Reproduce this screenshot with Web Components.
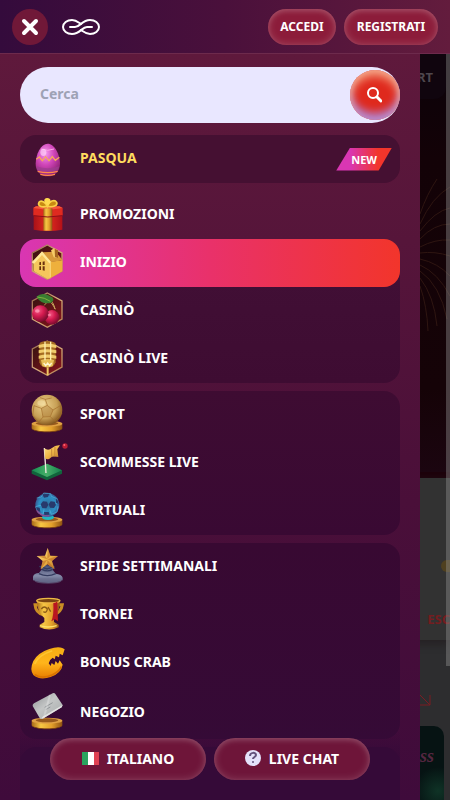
<!DOCTYPE html>
<html lang="it">
<head>
<meta charset="utf-8">
<meta name="viewport" content="width=device-width, initial-scale=1">
<title>Menu</title>
<style>
  html, body { height: 100%; }
  body {
    margin: 0;
    overflow: hidden;
    background: #2d2d2f;
    color: #fff;
    font-family: "Noto Sans", sans-serif;
    font-size: 14px;
    font-weight: 700;
  }
</style>
</head>
<body>
<casino-app></casino-app>

<script>
// small helper so every element gets an open root with its own styles
class BaseElement extends HTMLElement {
  constructor() {
    super();
    this.attachShadow({ mode: "open" });
  }
  connectedCallback() {
    this.shadowRoot.innerHTML = `<style>* { box-sizing: border-box; }</style>` + this.render();
  }
}

const hexagon = `
  <path d="M52 0 96 24V78L52 103 7 78V24Z" fill="url(#hexFill)" stroke="url(#rim)" stroke-width="4"/>`;

const pedestal = `
  <path d="M5 80v13c0 15 92 15 92 0V80Z" fill="url(#goldBar)"/>
  <path d="M5 92c4 15 88 15 92 0v2c-4 16-88 16-92 0Z" fill="#7a3f10"/>
  <ellipse cx="51" cy="80" rx="46" ry="9" fill="#dfa144"/>
  <ellipse cx="51" cy="79" rx="34" ry="6" fill="#96591c"/>`;

const icons = {
  egg: `
    <path d="M53 8C73 8 90 40 90 68 90 92 74 106 53 106S17 92 17 68C17 40 33 8 53 8Z" fill="url(#egg)"/>
    <path d="M19 55l9-7 9 11 10-12 10 12 10-12 9 11 12-9" fill="none" stroke="#f7a65c" stroke-width="4"/>
    <path d="M19 76q34 12 69 0l-4 12q-32 9-62 0Z" fill="#9b3f8f" opacity=".75"/>
    <path d="M23 91q30 8 60 0M31 100q22 6 44 0" fill="none" stroke="#ff8a48" stroke-width="4"/>
    <path d="M34 24q18 8 38 0" fill="none" stroke="#ffa6e9" stroke-width="3"/>
    <ellipse cx="40" cy="34" rx="9" ry="11" fill="#ffd4f8" opacity=".65"/>`,
  gift: `
    <path d="M11 48h86v50q-43 8-86 0Z" fill="url(#red)"/>
    <path d="M10 33 18 28h70l10 5v22q-44 8-88 0Z" fill="#df2a20"/>
    <path d="M10 33 18 28h70l10 5-44 6Z" fill="#f3563c"/>
    <path d="M40 34h27v67H40Z" fill="url(#goldBar)"/>
    <path d="M52 28C34 32 22 27 27 16c6-9 20 0 25 12C57 12 74 6 80 16c4 10-11 16-28 12Z" fill="#c88a12" stroke="#f8d046" stroke-width="5"/>
    <path d="M54 26C40 18 39 4 51 3s15 12 3 23Z" fill="#ffd94f"/>
    <path d="M11 56q42 8 86 0" fill="none" stroke="#8f0f17" stroke-width="3"/>`,
  home: `
    ${hexagon}
    <path d="M10 50 37 20 62 52v48L52 102 10 78Z" fill="#f5c75c"/>
    <path d="M60 50 97 46v33L60 100Z" fill="#eeb03c"/>
    <path d="M37 22 77 20 98 46 60 52Z" fill="#d8993a"/>
    <path d="M5 52 36 19l28 33-6 3-22-25-24 26Z" fill="#ffe998"/>
    <path d="M63 16l9-6 12 6v23l-13-2Z" fill="#f6cb68"/><path d="M74 11l10 5v23l-9-3Z" fill="#a66420"/>
    <path d="M28 52l5-1v9h-5Zm10-2 6-1v11h-6ZM28 64h5v11h-5Zm10 0h6v13l-6-1Z" fill="#69300d"/>
    <path d="M61 54v43" stroke="#fff0a5" stroke-width="2"/>`,
  cherry: `
    ${hexagon}
    <path d="M43 37C55 21 61 20 76 49M55 18q15 6 20 30" fill="none" stroke="#c9a55c" stroke-width="3"/>
    <circle cx="66" cy="73" r="22" fill="url(#cherry)"/>
    <circle cx="31" cy="62" r="25" fill="url(#cherry)"/>
    <ellipse cx="22" cy="54" rx="7" ry="5" fill="#ff9ab5" opacity=".8"/>
    <ellipse cx="58" cy="66" rx="5" ry="4" fill="#ff8ca9" opacity=".7"/>
    <path d="M19 11Q37-6 67 13q8 9-3 16Q36 37 19 11Z" fill="#397d31"/>
    <path d="M22 12q22 1 39 13" fill="none" stroke="#83b33f" stroke-width="3"/>`,
  mic: `
    ${hexagon}
    <path d="M28 8Q32 0 52 0t25 8v56q-6 16-25 16T28 64Z" fill="#a56c22"/>
    <path d="M26 12q26-8 53 0v9q-27-6-53 0ZM26 28q26-7 53 0v9q-27-6-53 0ZM26 44q26-7 53 0v9q-27-6-53 0Z" fill="#f0cc6c"/>
    <path d="M33 57q19-6 39 0l-4 19q-16 6-31 0Z" fill="#e8be58"/>
    <path d="M45 2v56M62 2v56" stroke="#fff1b0" stroke-width="4"/>
    <path d="M41 66l6 8 6-8 6 8 6-8" fill="none" stroke="#fff6cf" stroke-width="4"/>
    <path d="M53 79v24" stroke="#f0c763" stroke-width="6"/>`,
  ball: `
    ${pedestal}
    <circle cx="51" cy="39" r="46" fill="url(#ballGold)"/>
    <path d="M34 34 52 25l17 14-8 20-22 1ZM30 2l16 5 19-4M52 25l-6-18M34 34 12 26M39 60 26 76M61 59l14 14M69 39l22-13M12 26 8 55l18 21M91 26l4 24-20 23" fill="none" stroke="#a36c2b" stroke-width="2"/>
    <path d="M34 34 52 25l17 14-8 20-22 1Z" fill="#a97735" opacity=".4"/>
    <ellipse cx="34" cy="18" rx="12" ry="8" fill="#fff0bf" opacity=".4"/>`,
  flag: `
    <path d="M5 76 51 56l45 20v10l-45 20L5 86Z" fill="#11643c"/>
    <path d="M5 76 51 56l45 20-45 20Z" fill="url(#green)"/>
    <path d="M43 9 48 84" stroke="#efe6df" stroke-width="4"/>
    <path d="M43 10q12 9 23-1T90 1l-8 12 3 23q-18-4-24 3t-16 1Z" fill="url(#gold)"/>
    <path d="M65 10v26M75 5l-1 29" stroke="#c98a3a" stroke-width="3"/>
    <circle cx="105" cy="3" r="8" fill="#ba1e35"/><circle cx="103" cy="0" r="3" fill="#ff6573"/>`,
  cyber: `
    ${pedestal}
    <ellipse cx="54" cy="73" rx="18" ry="8" fill="#21b9c1"/>
    <circle cx="52" cy="36" r="36" fill="url(#blue)"/>
    <path d="M20 15l14-3 7-12 21 2 2 8 17 7-1 14-12 6M34 36l-17 5 8 19 14 4 3-15M59 50l5 14 17-7 3-17" fill="none" stroke="#4fb6dc" stroke-width="2"/>
    <path d="M32 34l7-9 12 1 4 10-6 10-12-1ZM56 34l6-9 12 1 4 10-6 9-12-1ZM37 4l21-2-4 10-12 2ZM18 43l11 1 2 12-9-2ZM78 16l6 8 2 9-8-4ZM42 57l14 0 3 8-16 1Z" fill="#283a6c"/>
    <path d="M20 52q14 20 38 16" fill="none" stroke="#8d4c92" stroke-width="4"/>`,
  star: `
    <path d="M9 83q3-11 18-11l9-12-7-8 22-4 23 6-6 8 9 12q18 1 21 12v8q-40 16-89 0Z" fill="url(#stone)"/>
    <path d="M28 52l23 8 23-7M36 61q16 9 32 0M27 74q25 12 50 0" fill="none" stroke="#343b5f" stroke-width="4"/>
    <ellipse cx="54" cy="96" rx="40" ry="8" fill="#6d718f" opacity=".55"/>
    <path d="M53-3 61 20l23 1-18 15 8 25-22-15-20 15 6-25-18-15 25-1Z" fill="url(#gold)"/>
    <path d="M53-3 52 30 61 20ZM84 21 52 31l14 5ZM74 61 52 32v14ZM32 61l20-29-14 4ZM20 21l32 10-7-11Z" fill="#b35e20" opacity=".5"/>`,
  cup: `
    <path d="M26 23H15q2 24 24 30M84 23h13q-3 22-24 30" fill="none" stroke="#c98d24" stroke-width="9"/>
    <path d="M20 10q34 12 70 0-1 38-18 53v12l14 8v8q-28 13-57 0v-8l14-8V63Q22 48 20 10Z" fill="url(#goldBar)"/>
    <ellipse cx="55" cy="11" rx="35" ry="7" fill="#7a4511" stroke="#edba45" stroke-width="4"/>
    <path d="M70 18q8 0 12-5l2 60-9-6-11 6q8-18 6-55Z" fill="#b91520"/>
    <path d="M34 36q9-12 18 0-2 14-12 8M54 30l8 14" fill="none" stroke="#8a5a16" stroke-width="4"/>
    <path d="M30 86q23 8 50 0" fill="none" stroke="#ffe46b" stroke-width="4"/>`,
  crab: `
    <path d="M104 13 97 9Q83 3 58 12 24 23 10 48-2 74 10 90q19 17 52 6 31-11 36-37l-9-13-5 10-7-8-4 12-8-6-3 9-6-8q3-12 12-17l6 5 3-11 10 5 2-11 9 5Z" fill="url(#crab)"/>
    <path d="M15 55Q28 29 65 18" fill="none" stroke="#ffd445" stroke-width="5" stroke-linecap="round" opacity=".6"/>
    <path d="M14 89q22 14 52 1 22-10 28-25" fill="none" stroke="#d97300" stroke-width="5"/>`,
  card: `
    ${pedestal}
    <path d="M8 36q-1-5 4-8L68-2q5-3 8 2l22 33-3 7-57 34q-6 3-9-2Z" fill="url(#silver)"/>
    <path d="M38 74 95 40l3-7-63 37Z" fill="#e3e4e2"/>
    <path d="M44 40l24-14M47 47l14-8" fill="none" stroke="#93979a" stroke-width="3"/>
    <path d="M60 2 42 70" stroke="#fff" stroke-width="6" opacity=".25"/>`
};

class MenuIcon extends BaseElement {
  render() {
    return `
      <style>
        :host { display: block; width: 36px; height: 36px; flex: none; }
        svg { display: block; width: 100%; height: 100%; overflow: visible; }
      </style>
      <svg viewBox="0 0 108 108" aria-hidden="true">
        <defs>
          <linearGradient id="gold" x1="0" y1="0" x2="1" y2="1">
            <stop stop-color="#ffe58c"/><stop offset=".5" stop-color="#efb647"/><stop offset="1" stop-color="#b8722a"/>
          </linearGradient>
          <linearGradient id="rim" x1="0" y1="0" x2="1" y2="1">
            <stop stop-color="#8f5f45"/><stop offset=".5" stop-color="#d9ae7c"/><stop offset="1" stop-color="#b07b4e"/>
          </linearGradient>
          <linearGradient id="goldBar">
            <stop stop-color="#a76817"/><stop offset=".3" stop-color="#f7c744"/><stop offset=".65" stop-color="#e3a02b"/><stop offset="1" stop-color="#8c5112"/>
          </linearGradient>
          <linearGradient id="hexFill" x1="0" y1="0" x2="1" y2="1">
            <stop stop-color="#33120f"/><stop offset="1" stop-color="#8a141e"/>
          </linearGradient>
          <linearGradient id="red"><stop stop-color="#a91118"/><stop offset=".5" stop-color="#e32b20"/><stop offset="1" stop-color="#b31118"/></linearGradient>
          <linearGradient id="green"><stop stop-color="#168a52"/><stop offset=".5" stop-color="#46af68"/><stop offset="1" stop-color="#147e4d"/></linearGradient>
          <linearGradient id="stone" x1="0" y1="0" x2="0" y2="1"><stop stop-color="#444b70"/><stop offset=".6" stop-color="#858ba9"/><stop offset="1" stop-color="#4e5272"/></linearGradient>
          <linearGradient id="silver" x1="0" y1="0" x2="1" y2="1"><stop stop-color="#8c9093"/><stop offset=".45" stop-color="#c4c6c6"/><stop offset="1" stop-color="#a5a9aa"/></linearGradient>
          <linearGradient id="crab" x1="0" y1="0" x2="0" y2="1"><stop stop-color="#f4ad13"/><stop offset=".5" stop-color="#ffb51b"/><stop offset="1" stop-color="#e87c00"/></linearGradient>
          <radialGradient id="egg" cx=".4" cy=".3" r=".7"><stop stop-color="#f699ee"/><stop offset=".5" stop-color="#d045b9"/><stop offset="1" stop-color="#932278"/></radialGradient>
          <radialGradient id="cherry" cx=".35" cy=".3" r=".7"><stop stop-color="#f55b87"/><stop offset=".5" stop-color="#d51b50"/><stop offset="1" stop-color="#7d0b30"/></radialGradient>
          <radialGradient id="ballGold" cx=".4" cy=".35" r=".65"><stop stop-color="#ecd08c"/><stop offset=".65" stop-color="#c79f55"/><stop offset="1" stop-color="#86591f"/></radialGradient>
          <radialGradient id="blue"><stop stop-color="#2f6f9b"/><stop offset=".7" stop-color="#2d8fc4"/><stop offset="1" stop-color="#375b94"/></radialGradient>
        </defs>
        ${icons[this.getAttribute("name")] || ""}
      </svg>`;
  }
}

class PillButton extends BaseElement {
  render() {
    return `
      <style>
        :host { display: block; }
        button {
          display: flex;
          align-items: center;
          justify-content: center;
          gap: 8px;
          width: 100%;
          height: 36px;
          padding: 0 12px;
          border: 0;
          border-radius: 24px;
          background: #8c1c3a;
          box-shadow: inset 0 0 8px rgba(255, 255, 255, .2), inset 0 2px 5px rgba(255, 255, 255, .12);
          color: #fff;
          font: inherit;
          font-size: 12px;
          cursor: pointer;
        }
        :host([large]) button {
          height: 42px;
          padding-bottom: 2px;
          background: #6e1539;
          font-size: 14px;
        }
      </style>
      <button type="button"><slot name="icon"></slot><slot></slot></button>`;
  }
}

class TopBar extends BaseElement {
  render() {
    return `
      <style>
        :host {
          display: flex;
          align-items: center;
          height: 54px;
          padding: 0 12px;
          border-bottom: 1px solid #6d2a4c;
          background: linear-gradient(90deg, #340b3c, #4a103b 50%, #631c3d);
        }
        .close {
          display: grid;
          place-items: center;
          width: 36px;
          height: 36px;
          padding: 0;
          border: 0;
          border-radius: 50%;
          background: #701838;
        }
        .logo { margin-left: 14px; margin-right: auto; }
        .logo svg, .close svg { display: block; }
        .actions { display: flex; gap: 8px; }
        .login { min-width: 68px; }
        .signup { min-width: 94px; }
      </style>
      <button class="close" type="button" aria-label="Chiudi">
        <svg width="18" height="18" viewBox="0 0 18 18"><path d="M3 3 15 15M15 3 3 15" stroke="#fff" stroke-width="4" stroke-linecap="round"/></svg>
      </button>
      <a class="logo" href="#" aria-label="Home">
        <svg width="38" height="18" viewBox="0 0 38 18" fill="none" stroke="#fff" stroke-width="2" stroke-linecap="round" stroke-linejoin="round">
          <path d="M8 9h5c5 0 7-7 15-7 5 0 9 3 9 7s-4 7-9 7c-4 0-6-2-9-4"/>
          <path d="M30 9h-5c-5 0-7 7-15 7-5 0-9-3-9-7s4-7 9-7c4 0 6 2 9 4"/>
        </svg>
      </a>
      <div class="actions">
        <pill-button class="login">ACCEDI</pill-button>
        <pill-button class="signup">REGISTRATI</pill-button>
      </div>`;
  }
}

class SearchBox extends BaseElement {
  render() {
    return `
      <style>
        :host { display: block; }
        form {
          display: flex;
          align-items: center;
          height: 56px;
          border-radius: 28px;
          background: #e9e7ff;
          overflow: hidden;
        }
        input {
          flex: 1;
          min-width: 0;
          height: 100%;
          padding: 0 20px 4px;
          border: 0;
          outline: 0;
          background: none;
          color: #3a0c3b;
          font: inherit;
        }
        input::placeholder { color: #9ea2b5; opacity: 1; }
        button {
          display: grid;
          place-items: center;
          width: 50px;
          height: 50px;
          padding: 0 2px 0 0;
          border: 0;
          border-radius: 50%;
          background: #df291d;
          box-shadow: inset 0 6px 10px #f4a080, inset 0 -7px 9px #b184d0, inset 0 0 5px #e9a0b0;
        }
      </style>
      <form>
        <input type="search" placeholder="Cerca" aria-label="Cerca">
        <button type="button" aria-label="Avvia ricerca">
          <svg width="16" height="16" viewBox="0 0 16 16" fill="none" stroke="#fff" stroke-width="2" stroke-linecap="round"><circle cx="7" cy="6" r="5"/><path d="M11 10l4 4" stroke-width="3"/></svg>
        </button>
      </form>`;
  }
}

class MenuGroup extends BaseElement {
  render() {
    return `
      <style>
        :host {
          display: block;
          border-radius: 16px;
          background: var(--group-bg, #3a0a34);
        }
        :host([plain]) { background: none; }
      </style>
      <slot></slot>`;
  }
}

class MenuItem extends BaseElement {
  render() {
    const badge = this.getAttribute("badge");
    return `
      <style>
        :host { display: block; }
        a {
          display: flex;
          align-items: center;
          gap: 14px;
          height: 48px;
          padding: 0 8px 0 10px;
          border-radius: 16px;
          color: inherit;
          text-decoration: none;
        }
        .label { flex: 1; padding-bottom: 4px; }
        :host([highlight]) .label { color: #ffdc5f; }
        :host([active]) a { background: linear-gradient(90deg, #d936b3, #e9316a 50%, #f2352b); }
        :host([tall]) a { height: 50px; }
        :host([tall]) .label { padding-bottom: 2px; }
        .badge {
          padding: 0 15px;
          clip-path: polygon(25% 0, 100% 0, 76% 100%, 0 100%);
          background: linear-gradient(90deg, #d936b3 25%, #f2352b 75%);
          font-size: 11px;
          line-height: 23px;
        }
      </style>
      <a href="#">
        <menu-icon name="${this.getAttribute("icon")}"></menu-icon>
        <span class="label"><slot></slot></span>
        ${badge ? `<span class="badge">${badge}</span>` : ""}
      </a>`;
  }
}

class SideDrawer extends BaseElement {
  render() {
    return `
      <style>
        :host {
          display: grid;
          background: linear-gradient(#5f193c, #56153a 25%, #4a0f39 60%, #3f0b3b);
          overflow: hidden;
        }
        nav, footer { grid-area: 1 / 1; }
        nav {
          display: flex;
          flex-direction: column;
          gap: 8px;
          min-height: 0;
          padding: 13px 20px 0;
          overflow: hidden;
        }
        search-box { margin-bottom: 4px; }
        menu-group { flex: none; }
        .joined { margin-top: -8px; }
        .last { padding-bottom: 2px; }
        .more { height: 80px; }
        footer {
          display: flex;
          align-self: end;
          justify-content: center;
          gap: 8px;
          margin: 0 20px;
          padding: 10px 30px 20px;
          background: linear-gradient(transparent, #350a38 50%);
        }
        footer pill-button { flex: 1; }
      </style>
      <nav aria-label="Menu principale">
        <search-box></search-box>
        <menu-group style="--group-bg: #451032">
          <menu-item icon="egg" highlight badge="NEW">PASQUA</menu-item>
        </menu-group>
        <menu-group plain>
          <menu-item icon="gift">PROMOZIONI</menu-item>
        </menu-group>
        <menu-group class="joined" style="--group-bg: linear-gradient(#421036, #3e0c32)">
          <menu-item icon="home" active>INIZIO</menu-item>
          <menu-item icon="cherry">CASINÒ</menu-item>
          <menu-item icon="mic">CASINÒ LIVE</menu-item>
        </menu-group>
        <menu-group style="--group-bg: linear-gradient(#3e0c32, #390933)">
          <menu-item icon="ball">SPORT</menu-item>
          <menu-item icon="flag">SCOMMESSE LIVE</menu-item>
          <menu-item icon="cyber">VIRTUALI</menu-item>
        </menu-group>
        <menu-group class="last" style="--group-bg: linear-gradient(#380932, #350a36)">
          <menu-item icon="star">SFIDE SETTIMANALI</menu-item>
          <menu-item icon="cup">TORNEI</menu-item>
          <menu-item icon="crab">BONUS CRAB</menu-item>
          <menu-item icon="card" tall>NEGOZIO</menu-item>
        </menu-group>
        <menu-group class="more" style="--group-bg: #350a38"></menu-group>
      </nav>
      <footer>
        <pill-button large>
          <svg slot="icon" width="17" height="13" viewBox="0 0 17 13" aria-hidden="true"><path fill="#29a45e" d="M0 0h6v13H0z"/><path fill="#fff" d="M6 0h6v13H6z"/><path fill="#df4153" d="M12 0h5v13h-5z"/></svg>ITALIANO
        </pill-button>
        <pill-button large>
          <svg slot="icon" width="16" height="16" viewBox="0 0 16 16" aria-hidden="true"><circle cx="8" cy="8" r="8" fill="#e4e2fa"/><path d="M5 6c0-4 6-4 6-1 0 2-3 2-3 4" fill="none" stroke="#62527c" stroke-width="2"/><circle cx="8" cy="12" r="1" fill="#62527c"/></svg>LIVE CHAT
        </pill-button>
      </footer>`;
  }
}

// the dimmed page that stays visible beside the open drawer
class PageBehind extends BaseElement {
  render() {
    return `
      <style>
        :host { display: flex; flex-direction: column; background: #2d2d2f; }
        .hero {
          height: 424px;
          border-bottom: 6px solid #1d020b;
          background: linear-gradient(#0b0209, #130207 25%, #150307 80%, #1b0510);
        }
        .tab {
          display: flex;
          justify-content: flex-end;
          align-items: center;
          height: 45px;
          padding-right: 13px;
          margin-right: 4px;
          border-radius: 0 0 12px 0;
          background: #10050e;
          color: #4e474d;
          font-size: 13px;
        }
        .fireworks { display: block; width: 30px; height: 170px; margin: 80px 0 0 auto; }
        .card {
          display: flex;
          flex-direction: column;
          align-items: flex-end;
          justify-content: flex-end;
          height: 162px;
          padding-bottom: 12px;
          border-radius: 0 0 0 10px;
          background: #323232;
          box-shadow: 0 4px 8px #252023;
          color: #741d20;
          font-size: 13px;
        }
        .coin { width: 9px; height: 12px; border-radius: 6px 0 0 6px; background: #4f401f; margin-bottom: 38px; }
        .arrow { display: block; flex: none; margin: 52px 19px 0 auto; }
        .game {
          flex: 1;
          margin: 20px 6px 0 0;
          padding-right: 10px;
          border-radius: 0 10px 0 0;
          background: radial-gradient(circle at calc(100% - 6px) 65px, #0f3326, #061313 24px);
          color: #542640;
          text-align: right;
          font: italic 900 18px/60px "Liberation Serif", serif;
        }
      </style>
      <div class="hero">
        <div class="tab">SPORT</div>
        <svg class="fireworks" viewBox="0 0 30 170" fill="none" stroke="#49291c" stroke-width="1" opacity=".5">
          <path d="M0 45Q12 18 30 8M0 52q15-20 30-23M0 60q14-15 30-15M0 68q15-8 30-7M0 74q15-2 30 3M0 80q18 4 30 17M0 86q18 8 30 31M0 92q20 14 27 48M0 99q14 18 17 48M0 107q7 20 8 45M0 35Q7 15 17 0"/>
        </svg>
      </div>
      <div class="card"><span class="coin"></span><span>ESC</span></div>
      <svg class="arrow" width="14" height="14" viewBox="0 0 14 14" fill="none" stroke="#7a1d23" stroke-width="1"><path d="M0 0 13 13M13 3V13H3"/></svg>
      <div class="game">ss</div>`;
  }
}

class CasinoApp extends BaseElement {
  render() {
    return `
      <style>
        :host {
          display: grid;
          grid-template: auto 1fr / 1fr 26px 4px;
          height: 100vh;
          overflow: hidden;
        }
        top-bar { grid-area: 1 / 1 / 2 / 4; z-index: 1; }
        page-behind { grid-area: 2 / 1 / 3 / 4; min-height: 0; }
        side-drawer { grid-area: 2 / 1 / 3 / 2; min-height: 0; z-index: 1; }
        /* translucent scroll bar, the page shows through */
        .thumb {
          grid-area: 2 / 3;
          height: 82%;
          background: rgba(150, 150, 150, .4);
          pointer-events: none;
          z-index: 1;
        }
      </style>
      <top-bar></top-bar>
      <page-behind></page-behind>
      <side-drawer></side-drawer>
      <div class="thumb"></div>`;
  }
}

customElements.define("menu-icon", MenuIcon);
customElements.define("pill-button", PillButton);
customElements.define("top-bar", TopBar);
customElements.define("search-box", SearchBox);
customElements.define("menu-group", MenuGroup);
customElements.define("menu-item", MenuItem);
customElements.define("side-drawer", SideDrawer);
customElements.define("page-behind", PageBehind);
customElements.define("casino-app", CasinoApp);
</script>
</body>
</html>
